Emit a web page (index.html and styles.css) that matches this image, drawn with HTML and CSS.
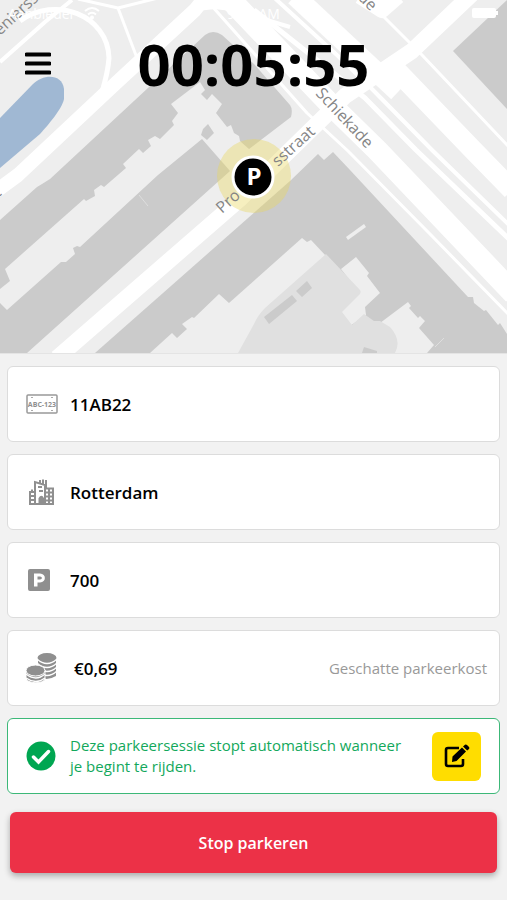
FILE: index.html
```html
<!DOCTYPE html>
<html lang="nl">
<head>
<meta charset="utf-8">
<meta name="viewport" content="width=device-width, initial-scale=1">
<title>Parkeersessie</title>
<link rel="stylesheet" href="styles.css">
</head>
<body>
<header class="hero">
  <svg class="map" viewBox="0 0 507 353" preserveAspectRatio="xMidYMid slice" aria-hidden="true">
    <rect width="507" height="353" fill="#eeeeee"/>
    <!-- water -->
    <path d="M0 118 33 84C43 74 62 73 64 89V99C62 109 48 125 40 134L0 168Z" fill="#a0b8d3"/>
    <!-- buildings -->
    <g fill="#cbcbcb">
      <path d="M0 220 37 187 42 184 50 179 205 35Q213 29 222 35L254 64 290 105Q293 109 291 117L249 149 240 141 239 136 234 133 231 125 227 127 216 113 222 104 212 94 207 100 201 94 205 90 200 82 171 104 178 113 172 121 174 125 160 139 155 136 148 140 151 146 143 153 139 149 123 164 126 168 104 187 101 185 94 190 95 196 86 201 84 199 5 269 10 281 0 289Z"/>
      <path d="M0 303 7 310 61 262 66 262 75 254 73 248 77 246 80 247 158 175 202 139 230 171 27 353H0Z"/>
      <path d="M203 129 208 124 214 133 207 140 201 135Z"/>
      <path d="M95 353 290 181 318 154 324 160 333 152 350 170 468 297 473 297 474 303 484 311 486 310 498 325 500 323 507 334V353Z"/>
      <path d="M453 51 507 0V109Z"/>
    </g>
    <path d="M139 195 148 206M435 347 444 338" stroke="#dedede" stroke-width="1"/>
    <!-- courtyards -->
    <g fill="#eeeeee">
      <path d="M150 353 172 333 177 338 187 329 182 324 192 317 194 318 219 294 229 303 302 238 307 242 311 240 326 256 264 315 240 353Z"/>
      <path d="M341 269 356 257 369 273 367 276 380 293 365 307 366 315 350 326 340 312 359 292Z"/>
      <path d="M380 323 408 302 411 306 409 308 418 318 420 316 425 321 419 328 434 345 427 353H392Z"/>
      <path d="M346 237 364 224 366 227 348 240Z"/>
    </g>
    <path d="M238 353 254 324Q258 315 265 308L326 254 360 290Q362 293 358 296L342 312 352 325 364 314 374 321 380 321 390 327Q402 340 395 353Z" fill="#e0e0e0"/>
    <path d="M264 317 292 295 297 301 269 324ZM296 291 307 281 312 288 302 297ZM364 347 377 351V353H362Z" fill="#cbcbcb"/>
    <!-- roads -->
    <g fill="none" stroke="#ffffff" stroke-linejoin="round">
      <path d="M-5 192 18 175 115 84 195 10 207-5" stroke-width="14"/>
      <path d="M57 358 240 199 327 114 345 96 412 51 472-6" stroke-width="16"/>
      <path d="M196 4 215 2 232 4 262 26" stroke-width="14"/>
      <path d="M240 12 290 27" stroke-width="4"/>
      <path d="M0 62 45 22 72 0" stroke-width="4"/>
      <path d="M20 21C55-5 108 15 109 58Q108 72 102 92" stroke-width="5"/>
      <path d="M78-1 118 8 158-2M118 8 137 58" stroke-width="3"/>
      <path d="M211 5 307 113 348 151 430 234 510 316" stroke-width="3"/>
      <path d="M225-6 330 104 377 150 514 294" stroke-width="22"/>
      <path d="M254 10 365 98 416 150 510 240" stroke-width="5"/>
      <path d="M268-8 338 56 373 90 432 150 510 226" stroke-width="4"/>
      <path d="M295-4 398 92" stroke-width="20"/>
      <path d="M390 65 398 72 473 150 512 190" stroke-width="20"/>
      <path d="M352-12 382 15 422 55 508 146" stroke-width="3"/>
      <path d="M360-4 382 10 398-4" stroke-width="16"/>
    </g>
    <circle cx="254" cy="176" r="37" fill="#e8d860" fill-opacity=".4"/>
    <g class="street">
      <text transform="translate(222 214) rotate(-42)">Pro</text>
      <text transform="translate(278 167) rotate(-42)">sstraat</text>
      <text transform="translate(315 94) rotate(47)">Schiekade</text>
      <text transform="translate(351 -8) rotate(45)">ade</text>
      <text transform="translate(0 36) rotate(-43)">eniersstr</text>
      <text transform="translate(-2 198) rotate(-42)">t</text>
    </g>
    <circle cx="253" cy="177" r="20" fill="#000" stroke="#fff" stroke-width="3"/>
    <text class="pin" x="254" y="185" text-anchor="middle">P</text>
  </svg>
  <div class="overlay">
    <div class="status">
      <span class="carrier">Aanbieder
        <svg width="18" height="14" viewBox="0 0 18 14" fill="none" stroke="#fff" stroke-width="2" aria-hidden="true"><path d="M2 5Q9-1 16 5M5 8.500Q9 5 13 8.500"/><circle cx="9" cy="11.500" r="1"/></svg>
      </span>
      <span>9:41 AM</span>
      <svg class="battery" width="28" height="12" viewBox="0 0 28 12" aria-hidden="true"><rect x="1" y="1" width="24" height="10" rx="2" fill="#fff"/><path d="M26 4V8" stroke="#fff" stroke-width="2"/></svg>
    </div>
    <div class="topbar">
      <button class="menu" type="button" aria-label="Menu">
        <svg width="26" height="24" viewBox="0 0 26 24" aria-hidden="true"><path d="M1.500 2.500H24.500M1.500 11.500H24.500M1.500 20.500H24.500" stroke="#000" stroke-width="4" stroke-linecap="round"/></svg>
      </button>
      <h1 class="timer">00:05:55</h1>
    </div>
  </div>
</header>
<main class="content">
  <ul class="details">
    <li class="card">
      <svg class="icon" width="32" height="20" viewBox="0 0 32 20" aria-hidden="true"><rect x="1" y="1" width="30" height="18" rx="1" fill="none" stroke="#999" stroke-width="1.500"/><text class="plate" x="16" y="12.500" text-anchor="middle">ABC-123</text><path d="M5 3.500H7M25 3.500H27M5 16.500H7M25 16.500H27" stroke="#aaa"/></svg>
      <span class="value">11AB22</span>
    </li>
    <li class="card">
      <svg class="icon" width="32" height="28" viewBox="0 0 32 28" fill="none" stroke="#8f8f8f" stroke-width="2" aria-hidden="true"><path d="M4 26V14H9V26M9 14V4L19 7V26M19 10.500H27V26M3 26H28M4 18H9M4 22H9M19 14.500H27M19 18.500H27M19 22.500H27M23 10.500V26M12 9H16M13 13H17M13.500 26V20.500Q15.500 17 17 20.500V26M15.200 19V26M6 14V11.500M14 5V2M17 6V1.500M20 2V10"/></svg>
      <span class="value">Rotterdam</span>
    </li>
    <li class="card">
      <svg class="icon" width="32" height="22" viewBox="0 0 32 22" aria-hidden="true"><path fill="#8f8f8f" fill-rule="evenodd" d="M4 0H22Q24 0 24 2V20Q24 22 22 22H4Q2 22 2 20V2Q2 0 4 0ZM8 4.500V17.500H11.500V13.500H14C20.500 13.500 20.500 4.500 14 4.500ZM11.500 7.500H14C16.500 7.500 16.500 10.500 14 10.500H11.500Z"/></svg>
      <span class="value">700</span>
    </li>
    <li class="card">
      <svg class="icon" width="32" height="32" viewBox="0 0 32 32" aria-hidden="true">
        <g fill="#8f8f8f"><path d="M12 6V24Q20 30 30 24V6Z"/><ellipse cx="21" cy="6" rx="9.500" ry="5"/></g>
        <path d="M11 7Q21 16 31 7M11 11Q21 20 31 11M11 15Q21 24 31 15M11 19Q21 28 31 19" fill="none" stroke="#fff" stroke-width="1.300"/>
        <g fill="#8f8f8f" stroke="#fff"><path d="M0 18V27C3 32 17 32 19 27V18Z"/><ellipse cx="9.500" cy="18.500" rx="9.500" ry="5.500"/></g>
        <path d="M0 22Q10 30 19 22M0 26Q10 33 19 26" fill="none" stroke="#fff" stroke-width="1.300"/>
      </svg>
      <span class="value cost">€0,69</span>
      <span class="hint">Geschatte parkeerkost</span>
    </li>
    <li class="card notice">
      <svg class="icon" width="32" height="30" viewBox="0 0 32 30" aria-hidden="true"><circle cx="15" cy="15" r="14.500" fill="#00a651"/><path d="M7.500 16 12.500 21 22.500 10.500" fill="none" stroke="#fff" stroke-width="3.500" stroke-linecap="round"/></svg>
      <p class="message">Deze parkeersessie stopt automatisch wanneer je begint te rijden.</p>
      <button class="edit" type="button" aria-label="Bewerken">
        <svg width="26" height="24" viewBox="0 0 26 24" aria-hidden="true"><path d="M15 4H4Q2 4 2 6V20Q2 22 4 22H17Q19 22 19 20V15" fill="none" stroke="#000" stroke-width="2.600"/><path d="M8 18 8.500 12.500 18 3.500 22 7.500 12.500 17ZM19 2.500 21 .8Q22 0 23 1L25 3Q25.800 4 25 5L23.200 6.500Z"/></svg>
      </button>
    </li>
  </ul>
  <button class="stop" type="button">Stop parkeren</button>
</main>
</body>
</html>
```
FILE: styles.css
```css
* { box-sizing: border-box; }

body {
  margin: 0;
  min-height: 100vh;
  background: #f2f2f2;
  color: #000;
  font-family: "Open Sans", "Noto Sans", sans-serif;
  font-size: 16px;
}

button {
  border: 0;
  padding: 0;
  font: inherit;
  cursor: pointer;
}

svg { display: block; flex: none; }

.hero {
  display: grid;
  border-bottom: 1px solid #e4e4e4;
}

.map, .overlay { grid-area: 1 / 1; }

.map { width: 100%; height: auto; }

.street {
  fill: #858585;
  font-size: 16px;
}

.pin {
  fill: #fff;
  font-size: 24px;
  font-weight: 700;
}

.status {
  display: grid;
  grid-template-columns: 1fr auto 1fr;
  align-items: center;
  height: 26px;
  padding: 0 8px;
  color: #fff;
  font-size: 14px;
}

.carrier { display: flex; align-items: center; gap: 8px; }

.battery { justify-self: end; }

.topbar {
  display: grid;
  grid-template-columns: 64px 1fr 64px;
  align-items: center;
  padding: 0 12px;
}

.menu {
  display: grid;
  place-items: center;
  width: 52px;
  height: 48px;
  background: none;
}

.timer {
  margin: 0;
  text-align: center;
  font-size: 58px;
  font-weight: 700;
  line-height: 76px;
}

.content { padding: 12px 7px 26px; }

.details {
  display: grid;
  gap: 12px;
  margin: 0;
  padding: 0;
  list-style: none;
}

.card {
  display: flex;
  align-items: center;
  gap: 12px;
  min-height: 76px;
  padding: 0 12px 0 18px;
  background: #fff;
  border: 1px solid #dcdcdc;
  border-radius: 6px;
}

.plate {
  fill: #8f8f8f;
  font-size: 7px;
  font-weight: 700;
}

.value {
  font-size: 17px;
  font-weight: 600;
}

.cost { margin-left: 4px; }

.hint {
  margin-left: auto;
  color: #999;
  font-size: 15px;
}

.notice {
  padding-right: 18px;
  border-color: #3cb878;
}

.message {
  flex: 1;
  margin: 0;
  padding-right: 12px;
  color: #13a85b;
  font-size: 15px;
  line-height: 21px;
}

.edit {
  display: grid;
  place-items: center;
  width: 49px;
  height: 49px;
  border-radius: 6px;
  background: #ffdd00;
}

.stop {
  display: block;
  width: calc(100% - 6px);
  min-height: 61px;
  margin: 18px 3px 0;
  border-radius: 6px;
  background: #ec3147;
  box-shadow: 0 3px 6px rgb(0 0 0 / 30%);
  color: #fff;
  font-size: 16px;
  font-weight: 600;
}
```
